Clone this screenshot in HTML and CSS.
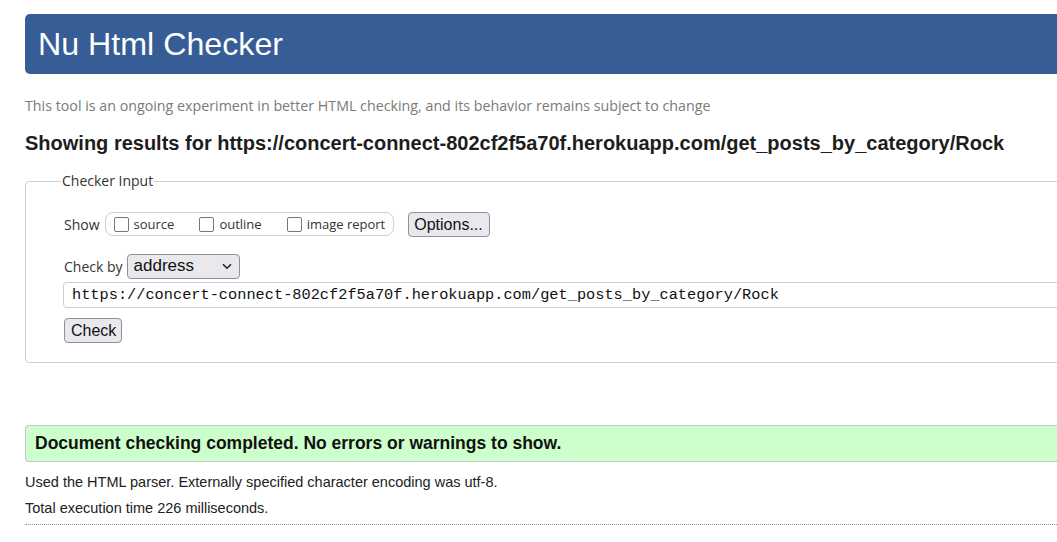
FILE: index.html
```html
<!DOCTYPE html>
<html lang="en">
<head>
<meta charset="utf-8">
<title>Nu Html Checker</title>
<link rel="stylesheet" href="styles.css">
</head>
<body>
<div class="page">
  <h1 class="masthead">Nu Html Checker</h1>
  <p class="tagline">This tool is an ongoing experiment in better HTML checking, and its behavior remains subject to change</p>
  <p class="showing">Showing results for https://concert-connect-802cf2f5a70f.herokuapp.com/get_posts_by_category/Rock</p>
  <fieldset class="checker">
    <legend>Checker Input</legend>
    <div class="row show-row">
      <span class="label">Show</span>
      <span class="pill">
        <label class="opt"><span class="box"></span>source</label>
        <label class="opt"><span class="box"></span>outline</label>
        <label class="opt"><span class="box"></span>image report</label>
      </span>
      <span class="btn options">Options...</span>
    </div>
    <div class="row by-row">
      <span class="label">Check by</span>
      <span class="select">address<svg class="chev" width="10" height="7" viewBox="0 0 10 7"><path d="M1 1.2 L5 5.2 L9 1.2" fill="none" stroke="#222" stroke-width="1.6"/></svg></span>
    </div>
    <div class="url">https://concert-connect-802cf2f5a70f.herokuapp.com/get_posts_by_category/Rock</div>
    <span class="btn check">Check</span>
  </fieldset>
  <div class="success">Document checking completed. No errors or warnings to show.</div>
  <p class="meta first">Used the HTML parser. Externally specified character encoding was utf-8.</p>
  <p class="meta">Total execution time 226 milliseconds.</p>
  <hr class="dots">
</div>
</body>
</html>
```
FILE: styles.css
```css
html, body { margin: 0; padding: 0; overflow: hidden; background: #fff; }
body { font-family: "Liberation Sans", Arial, sans-serif; color: #222; }
.page { width: 1100px; padding: 14px 0 0 25px; }

.masthead {
  margin: 0;
  height: 60px;
  line-height: 60px;
  background: #365d95;
  color: #fff;
  font-weight: normal;
  font-size: 32.2px;
  padding-left: 13px;
  border-radius: 5px 0 0 5px;
}

.tagline {
  margin: 22px 0 0;
  font-family: "Open Sans", sans-serif;
  font-size: 14.25px;
  line-height: 20px;
  color: #7a7a7a;
}

.showing {
  margin: 15px 0 0;
  font-size: 20px;
  font-weight: bold;
  line-height: 24px;
  color: #1d1d1d;
}

.checker {
  margin: 17px 0 0;
  padding: 0 0 19px 38px;
  border: 1px solid #cfcfcf;
  border-radius: 4px 0 0 4px;
  font-family: "Open Sans", sans-serif;
  font-size: 14px;
  color: #333;
}
.checker legend {
  padding: 0 1px;
  margin-left: -3px;
  font-size: 14px;
  line-height: 18px;
}

.row { display: flex; align-items: center; }
.label { margin-right: 4px; }
.show-row { margin-top: 21px; height: 26px; }
.pill {
  display: flex;
  align-items: center;
  height: 22px;
  border: 1px solid #cfcfcf;
  border-radius: 8px;
  padding: 0 8px 0 8px;
  margin-left: 1px;
  font-size: 13px;
}
.opt { display: flex; align-items: center; margin-right: 25px; color: #333; }
.opt:last-child { margin-right: 0; }
.box {
  width: 15px; height: 15px;
  box-sizing: border-box;
  border: 1.5px solid #767676;
  border-radius: 2px;
  margin-right: 5px;
  background: #fff;
}
.btn {
  display: inline-block;
  font-family: "Liberation Sans", Arial, sans-serif;
  font-size: 16px;
  background: #e9e9ed;
  border: 1px solid #8f8f9d;
  border-radius: 4px;
  color: #111;
  box-sizing: border-box;
  line-height: 23px;
  height: 25px;
}
.options { margin-left: 14px; padding: 0 6px 0 5px; }

.by-row { margin-top: 16px; height: 26px; }
.select {
  display: flex;
  align-items: center;
  justify-content: space-between;
  box-sizing: border-box;
  width: 113px;
  height: 25px;
  padding: 0 6px 0 6px;
  margin-left: 0;
  background: #e9e9ed;
  border: 1px solid #8f8f9d;
  border-radius: 4px;
  font-family: "Liberation Sans", Arial, sans-serif;
  font-size: 17px;
  color: #111;
}
.chev { margin-right: 1px; }

.url {
  margin: 3px 0 0 -1px;
  height: 26px;
  box-sizing: border-box;
  border: 1px solid #cfcfcf;
  border-radius: 4px 0 0 4px;
  padding-left: 8px;
  font-family: "Liberation Mono", "DejaVu Sans Mono", monospace;
  font-size: 15.3px;
  line-height: 24px;
  color: #111;
}
.check { margin-top: 10px; padding: 0 5px 0 6px; }

.success {
  margin-top: 62px;
  height: 37px;
  box-sizing: border-box;
  line-height: 35px;
  background: #ccffcc;
  border: 1px solid #c8c8c8;
  border-right: none;
  border-radius: 4px 0 0 4px;
  padding-left: 9px;
  font-weight: bold;
  font-size: 17.5px;
  color: #111;
}

.meta {
  margin: 0;
  font-size: 14.5px;
  line-height: 26px;
  color: #222;
}
.meta.first { margin-top: 7px; }
.dots {
  margin: 3px 0 0;
  border: none;
  border-top: 1px dotted #999;
  height: 0;
}
```
